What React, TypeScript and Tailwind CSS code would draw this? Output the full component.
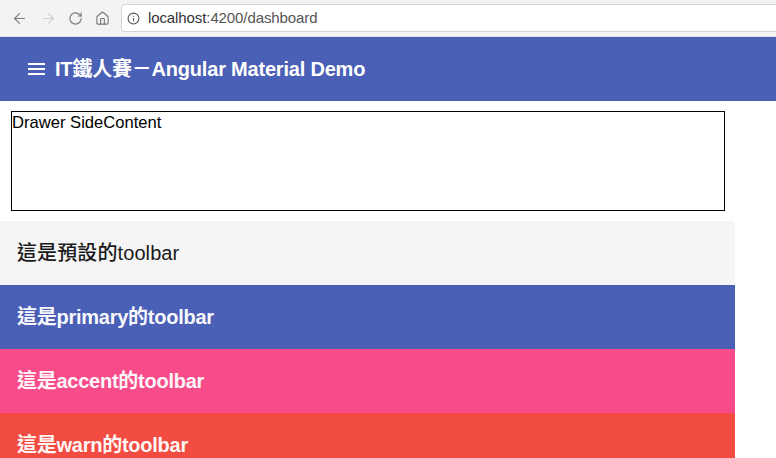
import React from "react";
import { ArrowLeft, ArrowRight, RotateCw, Home, Info } from "lucide-react";

const font = { fontFamily: '"Liberation Sans", "Noto Sans CJK TC", Arial, sans-serif' };

function Toolbar({ bg, text, color }: { bg: string; text: string; color: string }) {
  return (
    <div className={`h-[64px] shrink-0 flex items-center pl-[17px] text-[20px] ${bg} ${color}`}>
      {text}
    </div>
  );
}

export default function App() {
  return (
    <div className="w-[776px] h-[458px] overflow-hidden bg-white flex flex-col" style={font}>
      {/* browser chrome */}
      <div className="h-[37px] shrink-0 bg-[#f3f3f3] flex flex-col">
        <div className="flex items-start">
          <div className="flex items-center h-[36px] pl-[11px] gap-[12px] text-[#7b7b7b]">
            <ArrowLeft size={17} strokeWidth={1.6} />
            <ArrowRight size={17} strokeWidth={1.6} className="text-[#cfcfcf]" />
            <RotateCw size={15} strokeWidth={1.8} className="ml-[-1px]" />
            <Home size={15} strokeWidth={1.8} />
          </div>
          <div className="ml-[11px] mt-[4px] h-[28px] flex-1 bg-white border border-r-0 border-[#d4d4d4] rounded-l-[4px] flex items-center pl-[5px] gap-[8px]">
            <Info size={13} strokeWidth={2} className="text-[#555]" />
            <span className="text-[15px] text-[#555] tracking-[-0.1px]">
              <span className="text-[#333]">localhost</span>:4200/dashboard
            </span>
          </div>
        </div>
        <div className="h-[1px] bg-[#dcdfee] mt-auto" />
      </div>

      {/* app toolbar */}
      <div className="h-[64px] shrink-0 bg-[#4a5fb6] flex items-center pl-[28px] text-white">
        <svg width="17" height="14" viewBox="0 0 17 14" className="shrink-0">
          <rect x="0" y="1" width="17" height="2" fill="currentColor" />
          <rect x="0" y="6" width="17" height="2" fill="currentColor" />
          <rect x="0" y="11" width="17" height="2" fill="currentColor" />
        </svg>
        <span className="ml-[10px] text-[20px] font-bold tracking-[-0.2px]">IT鐵人賽－Angular Material Demo</span>
      </div>

      {/* content */}
      <div className="w-[735px] flex flex-col">
        <div className="mt-[10px] ml-[11px] mr-[10px] h-[100px] border border-black">
          <div className="text-[16.6px] leading-[22px] text-black">Drawer SideContent</div>
        </div>
        <div className="mt-[10px] flex flex-col">
          <Toolbar bg="bg-[#f5f5f5] rounded-tr-[3px]" color="text-[#1a1a1a] font-medium tracking-[0.1px]" text="這是預設的toolbar" />
          <Toolbar bg="bg-[#4a5fb6]" color="text-[#f8f8fc] font-bold tracking-[-0.25px]" text="這是primary的toolbar" />
          <Toolbar bg="bg-[#f84c8a]" color="text-[#fdf6f8] font-bold tracking-[-0.25px]" text="這是accent的toolbar" />
          <Toolbar bg="bg-[#f24b42]" color="text-[#fdf6f5] font-bold tracking-[-0.25px]" text="這是warn的toolbar" />
        </div>
      </div>
    </div>
  );
}
